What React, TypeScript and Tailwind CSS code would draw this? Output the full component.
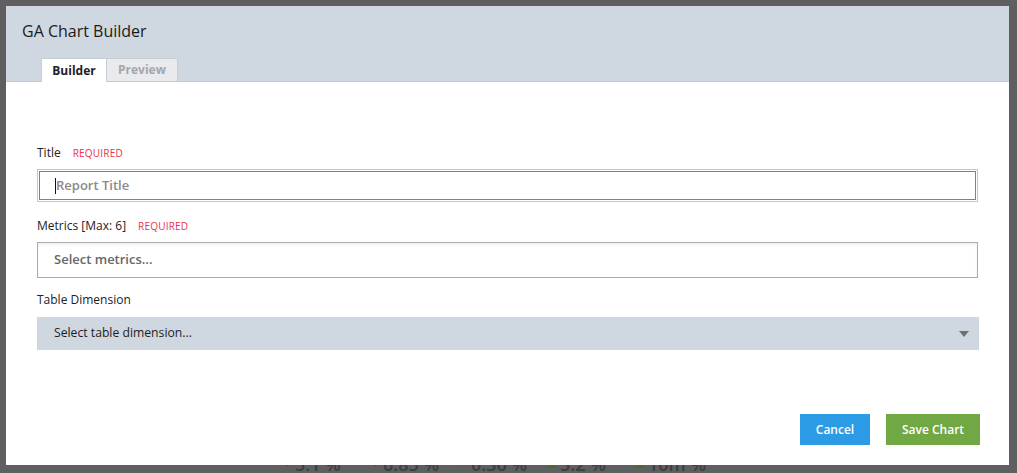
import React from "react";

export default function App() {
  const font = { fontFamily: '"Open Sans", "Liberation Sans", sans-serif' };
  const stats = [
    { v: "5.1 %", c: "red" },
    { v: "6.85 %", c: "red" },
    { v: "0.36 %", c: "green" },
    { v: "5.2 %", c: "sq" },
    { v: "10m %", c: "sq" },
  ];
  return (
    <div className="relative w-[1017px] h-[473px] bg-[#5f5f5f] overflow-hidden" style={font}>
      {/* faint page behind the overlay */}
      <div className="h-full flex flex-col justify-end">
        <div className="flex items-start h-[18px] pl-[283px] gap-[0px]">
          {stats.map((s, i) => (
            <div key={i} className="w-[88px] flex items-center gap-[4px]">
              {s.c === "sq" ? (
                <span className="w-[9px] h-[8px] bg-[#4b6a32]"></span>
              ) : (
                <span className={s.c === "red" ? "text-[8px] text-[#7a3434]" : "text-[8px] text-[#4b6a32]"}>▼</span>
              )}
              <span className="text-[18px] leading-[18px] font-semibold text-[#3e3e3e]">{s.v}</span>
            </div>
          ))}
        </div>
      </div>

      {/* modal */}
      <div className="absolute left-[6px] top-[6px] w-[1003px] h-[459px] bg-white flex flex-col">
        <div className="h-[76px] bg-[#cfd7e0] border-b border-[#c2c9d1] flex flex-col">
          <div className="pl-[16px] pt-[14px] text-[16px] leading-[22px] text-[#1b1b1b]">GA Chart Builder</div>
          <div className="flex mt-auto pl-[35px]">
            <div className="w-[66px] h-[24px] bg-white border border-b-0 border-[#c9ced4] text-[12px] font-bold text-[#222] flex items-center justify-center -mb-px">Builder</div>
            <div className="w-[71px] h-[23px] bg-[#e8eaed] border border-l-0 border-b-0 border-[#c9ced4] text-[12px] font-bold text-[#a3a6aa] flex items-center justify-center">Preview</div>
          </div>
        </div>
        <div className="pl-[31px] pr-[29px] pt-[63px] flex flex-col">
          <div className="flex items-center h-[16px]">
            <span className="text-[12px] text-[#222]">Title</span>
            <span className="ml-[12px] text-[10px] text-[#e8334a] tracking-[0.2px]">REQUIRED</span>
          </div>
          <div className="mt-[8px] mr-[2px] h-[33px] border border-[#c6c6c6] p-px">
            <div className="h-full border border-[#4592cc] flex items-center pl-[15px]">
              <span className="w-px h-[16px] bg-[#111]"></span>
              <span className="text-[13px] font-semibold text-[#8a8a8a]">Report Title</span>
            </div>
          </div>
          <div className="flex items-center h-[16px] mt-[16px]">
            <span className="text-[12px] text-[#222]">Metrics [Max: 6]</span>
            <span className="ml-[12px] text-[10px] text-[#e8334a] tracking-[0.2px]">REQUIRED</span>
          </div>
          <div className="mt-[8px] mr-[2px] h-[36px] border border-[#ababab] shadow-[inset_0_2px_3px_rgba(0,0,0,0.06)] flex items-center pl-[16px]">
            <span className="text-[13px] font-semibold text-[#666]">Select metrics...</span>
          </div>
          <div className="flex items-center h-[16px] mt-[14px]">
            <span className="text-[12px] text-[#222]">Table Dimension</span>
          </div>
          <div className="mt-[9px] mr-[1px] h-[33px] bg-[#cfd7e0] flex items-center pl-[17px] pr-[10px]">
            <span className="text-[12.2px] text-[#1e1e1e]">Select table dimension...</span>
            <svg className="ml-auto" width="10" height="6" viewBox="0 0 10 6">
              <path d="M0 0 L10 0 L5 6 Z" fill="#707070" />
            </svg>
          </div>
          <div className="flex justify-end gap-[16px] mt-[64px]">
            <button className="w-[70px] h-[31px] bg-[#2b9be6] text-white text-[12px] font-semibold">Cancel</button>
            <button className="w-[94px] h-[31px] bg-[#72a843] text-white text-[12px] font-semibold">Save Chart</button>
          </div>
        </div>
      </div>
    </div>
  );
}
